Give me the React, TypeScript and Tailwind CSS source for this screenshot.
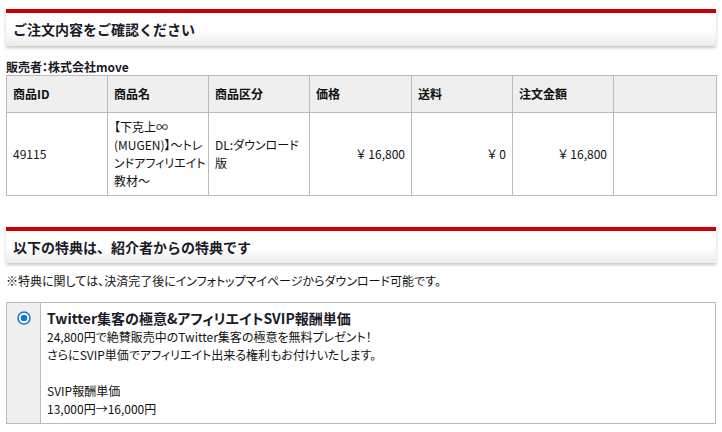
import React from "react";

const font = "font-['Noto_Sans_CJK_JP','Noto_Sans',sans-serif]";

const columns = [
  { label: "商品ID", width: "w-[101px]" },
  { label: "商品名", width: "w-[101px]" },
  { label: "商品区分", width: "w-[101px]" },
  { label: "価格", width: "w-[102px]" },
  { label: "送料", width: "w-[101px]" },
  { label: "注文金額", width: "w-[101px]" },
  { label: "", width: "w-[103px]" },
];

function SectionHeader({ title, height }: { title: string; height: string }) {
  return (
    <div className="border-t-4 border-[#cc0000] bg-gradient-to-b from-white from-50% to-[#ececec] shadow-[0_2px_3px_rgba(0,0,0,0.22)]">
      <h2
        className={`${height} flex items-center pl-[7px] text-[14px] font-bold text-[#1a1a28] [font-feature-settings:normal]`}
      >
        {title}
      </h2>
    </div>
  );
}

function Radio() {
  return (
    <svg width="14" height="14" viewBox="0 0 14 14">
      <circle cx="7" cy="7" r="6" fill="#fff" stroke="#1976d2" strokeWidth="1.6" />
      <circle cx="7" cy="7" r="3.3" fill="#1976d2" />
    </svg>
  );
}

export default function App() {
  return (
    <div className={`w-[722px] h-[432px] overflow-hidden bg-white px-[6px] pt-[9px] text-[12px] text-[#111] ${font} [font-feature-settings:'palt']`}>
      <SectionHeader title="ご注文内容をご確認ください" height="h-[33px]" />

      <p className="mt-[12px] h-[17px] text-[12px] font-bold leading-[17px] text-[#1a1a28]">
        販売者：株式会社move
      </p>

      <table className="w-full table-fixed border-collapse">
        <thead>
          <tr className="h-[37px] bg-[#efefef]">
            {columns.map((col, i) => (
              <th
                key={i}
                className={`${col.width} border border-[#bbbbbb] px-[6px] text-left text-[12px] font-bold text-[#111]`}
              >
                {col.label}
              </th>
            ))}
          </tr>
        </thead>
        <tbody>
          <tr className="h-[83px] leading-[18px]">
            <td className="border border-[#bbbbbb] px-[6px]">49115</td>
            <td className="border border-[#bbbbbb] px-[6px] py-[5px] whitespace-nowrap">
              【下克上∞
              <br />
              (MUGEN)】～トレ
              <br />
              ンドアフィリエイト
              <br />
              教材～
            </td>
            <td className="border border-[#bbbbbb] px-[6px] whitespace-nowrap">
              DL:ダウンロード
              <br />
              版
            </td>
            <td className="border border-[#bbbbbb] px-[6px] text-right">￥ 16,800</td>
            <td className="border border-[#bbbbbb] px-[6px] text-right">￥ 0</td>
            <td className="border border-[#bbbbbb] px-[6px] text-right">￥ 16,800</td>
            <td className="border border-[#bbbbbb]"></td>
          </tr>
        </tbody>
      </table>

      <div className="mt-[31px]">
        <SectionHeader title="以下の特典は、紹介者からの特典です" height="h-[32px]" />
      </div>

      <p className="mt-[10px] leading-[16px]">
        ※特典に関しては、決済完了後にインフォトップマイページからダウンロード可能です。
      </p>

      <div className="mt-[13px] flex border border-[#bbbbbb]">
        <div className="flex w-[34px] shrink-0 justify-center border-r border-[#bbbbbb] bg-[#efefef] pt-[8px]">
          <Radio />
        </div>
        <div className="flex-1 px-[6px] pt-[5px] pb-[5px] leading-[18px]">
          <p className="text-[14px] font-bold leading-[20px] text-[#1a1a28]">
            Twitter集客の極意&amp;アフィリエイトSVIP報酬単価
          </p>
          <p>24,800円で絶賛販売中のTwitter集客の極意を無料プレゼント！</p>
          <p>さらにSVIP単価でアフィリエイト出来る権利もお付けいたします。</p>
          <p className="h-[18px]"></p>
          <p>SVIP報酬単価</p>
          <p>13,000円→16,000円</p>
        </div>
      </div>
    </div>
  );
}
